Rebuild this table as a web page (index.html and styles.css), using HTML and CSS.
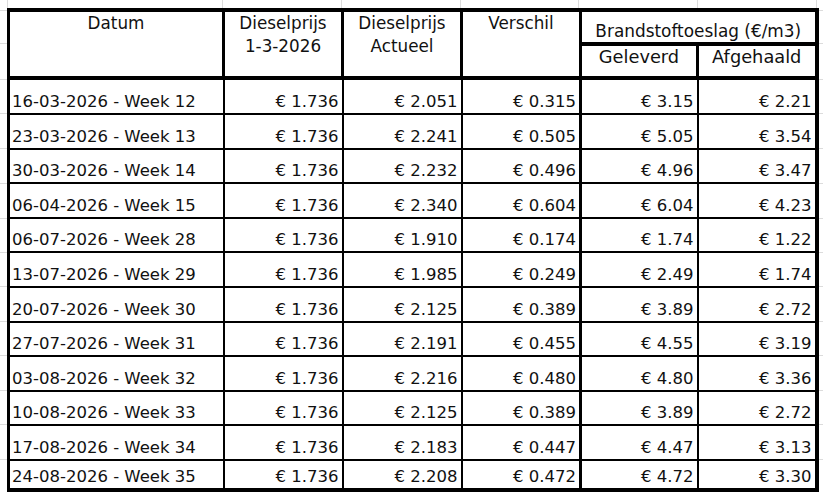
FILE: index.html
```html
<!DOCTYPE html>
<html lang="nl">
<head>
<meta charset="utf-8">
<title>Brandstoftoeslag</title>
<link rel="stylesheet" href="styles.css">
</head>
<body>
<table class="sheet">
  <colgroup>
    <col class="c-date">
    <col class="c-num">
    <col class="c-num">
    <col class="c-num">
    <col class="c-sub1">
    <col class="c-sub2">
  </colgroup>
  <thead>
    <tr class="h1">
      <th rowspan="2" class="hd">Datum</th>
      <th rowspan="2" class="hd">Dieselprijs<br>1-3-2026</th>
      <th rowspan="2" class="hd">Dieselprijs<br>Actueel</th>
      <th rowspan="2" class="hd">Verschil</th>
      <th colspan="2" class="group">Brandstoftoeslag (€/m3)</th>
    </tr>
    <tr class="h2">
      <th class="hd sub">Geleverd</th>
      <th class="hd sub">Afgehaald</th>
    </tr>
  </thead>
  <tbody>
    <tr class="first"><td class="date">16-03-2026 - Week 12</td><td>€ 1.736</td><td>€ 2.051</td><td class="sep">€ 0.315</td><td>€ 3.15</td><td>€ 2.21</td></tr>
    <tr><td class="date">23-03-2026 - Week 13</td><td>€ 1.736</td><td>€ 2.241</td><td class="sep">€ 0.505</td><td>€ 5.05</td><td>€ 3.54</td></tr>
    <tr><td class="date">30-03-2026 - Week 14</td><td>€ 1.736</td><td>€ 2.232</td><td class="sep">€ 0.496</td><td>€ 4.96</td><td>€ 3.47</td></tr>
    <tr><td class="date">06-04-2026 - Week 15</td><td>€ 1.736</td><td>€ 2.340</td><td class="sep">€ 0.604</td><td>€ 6.04</td><td>€ 4.23</td></tr>
    <tr><td class="date">06-07-2026 - Week 28</td><td>€ 1.736</td><td>€ 1.910</td><td class="sep">€ 0.174</td><td>€ 1.74</td><td>€ 1.22</td></tr>
    <tr><td class="date">13-07-2026 - Week 29</td><td>€ 1.736</td><td>€ 1.985</td><td class="sep">€ 0.249</td><td>€ 2.49</td><td>€ 1.74</td></tr>
    <tr><td class="date">20-07-2026 - Week 30</td><td>€ 1.736</td><td>€ 2.125</td><td class="sep">€ 0.389</td><td>€ 3.89</td><td>€ 2.72</td></tr>
    <tr><td class="date">27-07-2026 - Week 31</td><td>€ 1.736</td><td>€ 2.191</td><td class="sep">€ 0.455</td><td>€ 4.55</td><td>€ 3.19</td></tr>
    <tr><td class="date">03-08-2026 - Week 32</td><td>€ 1.736</td><td>€ 2.216</td><td class="sep">€ 0.480</td><td>€ 4.80</td><td>€ 3.36</td></tr>
    <tr><td class="date">10-08-2026 - Week 33</td><td>€ 1.736</td><td>€ 2.125</td><td class="sep">€ 0.389</td><td>€ 3.89</td><td>€ 2.72</td></tr>
    <tr><td class="date">17-08-2026 - Week 34</td><td>€ 1.736</td><td>€ 2.183</td><td class="sep">€ 0.447</td><td>€ 4.47</td><td>€ 3.13</td></tr>
    <tr class="last"><td class="date">24-08-2026 - Week 35</td><td>€ 1.736</td><td>€ 2.208</td><td class="sep">€ 0.472</td><td>€ 4.72</td><td>€ 3.30</td></tr>
  </tbody>
</table>
</body>
</html>
```
FILE: styles.css
```css
html {
  background-color: #ffffff;
  background-image:
    linear-gradient(to right,
      transparent 7px, #dcdcdc 7px 8px,
      transparent 8px 222px, #dcdcdc 222px 223px,
      transparent 223px 341px, #dcdcdc 341px 342px,
      transparent 342px 460px, #dcdcdc 460px 461px,
      transparent 461px 578px, #dcdcdc 578px 579px,
      transparent 579px 697px, #dcdcdc 697px 698px,
      transparent 698px 816px, #dcdcdc 816px 817px,
      transparent 817px),
    linear-gradient(to bottom,
      transparent 10px, #dcdcdc 10px 11px,
      transparent 11px 43px, #dcdcdc 43px 44px,
      transparent 44px 79px, #dcdcdc 79px 80px,
      transparent 80px 113px, #dcdcdc 113px 114px,
      transparent 114px 148px, #dcdcdc 148px 149px,
      transparent 149px 183px, #dcdcdc 183px 184px,
      transparent 184px 218px, #dcdcdc 218px 219px,
      transparent 219px 252px, #dcdcdc 252px 253px,
      transparent 253px 286px, #dcdcdc 286px 287px,
      transparent 287px 321px, #dcdcdc 321px 322px,
      transparent 322px 355px, #dcdcdc 355px 356px,
      transparent 356px 390px, #dcdcdc 390px 391px,
      transparent 391px 424px, #dcdcdc 424px 425px,
      transparent 425px 459px, #dcdcdc 459px 460px,
      transparent 460px);
  background-repeat: no-repeat;
}

body {
  margin: 0;
  padding: 8px 0 0 7px;
  font-family: "DejaVu Sans", "Liberation Sans", sans-serif;
  color: #111111;
}

.sheet {
  border-collapse: collapse;
  table-layout: fixed;
  width: 808px;
  background: #ffffff;
  border-top: 4px solid #000;
  border-right: 4px solid #000;
  border-bottom: 4px solid #000;
  border-left: 3px solid #000;
}

.c-date { width: 215px; }
.c-num { width: 119px; }
.c-sub1 { width: 117px; }
.c-sub2 { width: 119px; }

th, td {
  padding: 0 3px;
  white-space: nowrap;
  overflow: hidden;
}

th {
  font-weight: normal;
  border: 3px solid #000;
  font-size: 16.8px;
  line-height: 23px;
  text-align: center;
}

th.hd {
  vertical-align: top;
  border-bottom: 4px solid #000;
}

th.sub {
  font-size: 17.8px;
  line-height: 22px;
}

th.group {
  vertical-align: bottom;
  font-size: 16.9px;
  line-height: 20px;
  border-bottom: 4px solid #000;
  padding: 0 0 1px;
}

.h1 { height: 34px; }
.h2 { height: 34px; }

td {
  border: 2px solid #000;
  font-size: 16.5px;
  line-height: 20px;
  text-align: right;
  vertical-align: bottom;
  height: 31.6px;
  padding-bottom: 1px;
}

td.date {
  text-align: left;
  padding-left: 2px;
}

td.sep {
  border-right: 3px solid #000;
}

tr.first td { height: 32px; }
tr.last td { height: 26px; }
```
